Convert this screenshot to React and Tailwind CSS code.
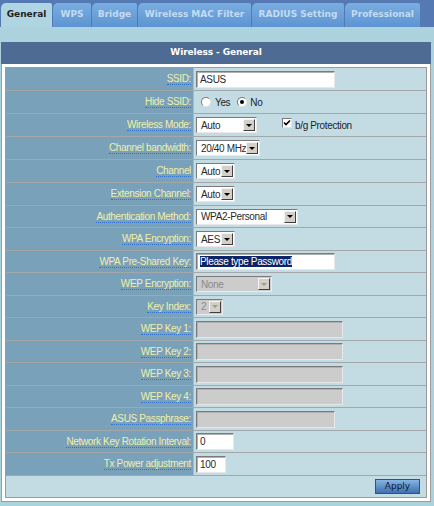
import React from "react";

const tabs = [
  { name: "General", w: "w-[51px]", active: true },
  { name: "WPS", w: "w-[38px]" },
  { name: "Bridge", w: "w-[45px]" },
  { name: "Wireless MAC Filter", w: "w-[113px]" },
  { name: "RADIUS Setting", w: "w-[92px]" },
  { name: "Professional", w: "w-[75px]" },
];

function Arrow({ disabled }) {
  return (
    <span className="flex h-full w-[12px] shrink-0 items-center justify-center border border-t-[#f4f4f4] border-l-[#f4f4f4] border-r-[#404040] border-b-[#404040] bg-[#d4d0c8]">
      <span
        className={`h-0 w-0 border-x-[3px] border-t-[3px] border-x-transparent ${
          disabled ? "border-t-[#9a9a9a]" : "border-t-black"
        }`}
      />
    </span>
  );
}

function Select({ w, value, disabled }) {
  return (
    <div
      className={`flex h-[16px] ${w} items-stretch border border-t-[#7a7a7a] border-l-[#7a7a7a] border-r-[#eaeaea] border-b-[#eaeaea] py-[1px] pr-[1px] ${
        disabled ? "bg-[#cccccc] text-[#8a8a8a]" : "bg-white text-[#2a2a2a]"
      }`}
    >
      <span className="flex min-w-0 flex-1 items-center overflow-hidden whitespace-nowrap pl-[4px]">
        {value}
      </span>
      <Arrow disabled={disabled} />
    </div>
  );
}

function Input({ w, value, disabled, selected }) {
  return (
    <div
      className={`flex h-[17px] ${w} items-center whitespace-nowrap border border-t-[#7a7a7a] border-l-[#7a7a7a] border-r-[#e8e8e8] border-b-[#e8e8e8] pl-[3px] text-[#2a2a2a] shadow-[inset_1px_1px_0_#b0b0b0] ${
        disabled ? "bg-[#cccccc]" : "bg-white"
      }`}
    >
      {selected ? (
        <span className="bg-[#0a246a] leading-[11px] text-white">{value}</span>
      ) : (
        value
      )}
    </div>
  );
}

function Radio({ checked }) {
  return (
    <span className="flex h-[10px] w-[10px] items-center justify-center rounded-full border border-t-[#7a7a7a] border-l-[#7a7a7a] border-r-[#e4e4e4] border-b-[#e4e4e4] bg-white">
      {checked && <span className="h-[4px] w-[4px] rounded-full bg-black" />}
    </span>
  );
}

function Checkbox() {
  return (
    <span className="flex h-[10px] w-[10px] items-center justify-center border border-t-[#7a7a7a] border-l-[#7a7a7a] border-r-[#e4e4e4] border-b-[#e4e4e4] bg-white">
      <svg width="8" height="8" viewBox="0 0 8 8">
        <path d="M1 3.5 L3 5.5 L7 1.5" stroke="black" strokeWidth="1.6" fill="none" />
      </svg>
    </span>
  );
}

const rows = [
  { label: "SSID:", h: "h-[23px]", el: <Input w="w-[139px]" value="ASUS" /> },
  {
    label: "Hide SSID:",
    h: "h-[23px]",
    el: (
      <div className="flex items-center pl-[5px]">
        <Radio />
        <span className="ml-[4px]">Yes</span>
        <span className="ml-[7px]">
          <Radio checked />
        </span>
        <span className="ml-[3px]">No</span>
      </div>
    ),
  },
  {
    label: "Wireless Mode:",
    h: "h-[23px]",
    el: (
      <div className="flex items-center">
        <Select w="w-[61px]" value="Auto" />
        <span className="-mt-[4px] ml-[25px]">
          <Checkbox />
        </span>
        <span className="ml-[3px]">b/g Protection</span>
      </div>
    ),
  },
  { label: "Channel bandwidth:", h: "h-[23px]", el: <Select w="w-[64px]" value="20/40 MHz" /> },
  { label: "Channel", h: "h-[23px]", el: <Select w="w-[39px]" value="Auto" /> },
  { label: "Extension Channel:", h: "h-[23px]", el: <Select w="w-[39px]" value="Auto" /> },
  { label: "Authentication Method:", h: "h-[22px]", el: <Select w="w-[102px]" value="WPA2-Personal" /> },
  { label: "WPA Encryption:", h: "h-[23px]", el: <Select w="w-[39px]" value="AES" /> },
  {
    label: "WPA Pre-Shared Key:",
    h: "h-[22px]",
    el: <Input w="w-[139px]" value="Please type Password" selected />,
  },
  { label: "WEP Encryption:", h: "h-[23px]", el: <Select w="w-[76px]" value="None" disabled /> },
  { label: "Key Index:", h: "h-[22px]", el: <Select w="w-[27px]" value="2" disabled /> },
  { label: "WEP Key 1:", h: "h-[23px]", el: <Input w="w-[147px]" disabled /> },
  { label: "WEP Key 2:", h: "h-[22px]", el: <Input w="w-[147px]" disabled /> },
  { label: "WEP Key 3:", h: "h-[23px]", el: <Input w="w-[147px]" disabled /> },
  { label: "WEP Key 4:", h: "h-[22px]", el: <Input w="w-[147px]" disabled /> },
  { label: "ASUS Passphrase:", h: "h-[23px]", el: <Input w="w-[139px]" disabled /> },
  { label: "Network Key Rotation Interval:", h: "h-[22px]", el: <Input w="w-[38px]" value="0" /> },
  { label: "Tx Power adjustment", h: "h-[23px]", el: <Input w="w-[30px]" value="100" /> },
];

export default function App() {
  return (
    <div className="h-[506px] w-[434px] overflow-hidden bg-[#acd2de] font-['Liberation_Sans',Arial,sans-serif] text-[10px] tracking-[-0.35px]">
      {/* tab strip */}
      <div className="flex h-[27px] items-end gap-[1px] bg-[#5479b3] pl-[1px]">
        {tabs.map((t) => (
          <div
            key={t.name}
            className={`flex h-[24px] ${t.w} items-center justify-center rounded-tl-[5px] rounded-tr-[2px] font-['DejaVu_Sans',Verdana,sans-serif] text-[9px] font-bold tracking-normal ${
              t.active
                ? "bg-[#b0d5e2] text-[#1e1e1e]"
                : "bg-gradient-to-b from-[#7aaee2] to-[#5d94d2] text-[#c4dcf2]"
            }`}
          >
            {t.name}
          </div>
        ))}
      </div>

      <div className="pl-[1px] pt-[15px]">
        <div className="flex h-[22px] w-[430px] items-center justify-center bg-[#4d6b93] font-['DejaVu_Sans',Verdana,sans-serif] text-[9px] font-bold tracking-[-0.1px] text-white">
          Wireless - General
        </div>

        <div className="w-[430px] border-x border-b border-[#9c9c9c] bg-white p-[3px]">
          <div className="border border-[#9a9a9a]">
            {rows.map((r) => (
              <div key={r.label} className={`flex ${r.h} border-b border-[#a2a8aa]`}>
                <div className="flex w-[188px] items-center justify-end border-r border-[#a9bac2] bg-[#7aa1ba] pr-[2px]">
                  <span className="border-b border-dotted border-[#2f6fc9] leading-[11px] text-[#f0f0a6]">
                    {r.label}
                  </span>
                </div>
                <div className="flex flex-1 items-center bg-[#c3dce4] pl-[2px] text-[#1e1e1e]">
                  {r.el}
                </div>
              </div>
            ))}
            <div className="flex h-[21px] items-center justify-end bg-[#c3dce4] pr-[6px]">
              <button className="flex h-[15px] w-[45px] items-center justify-center border border-[#2d5287] bg-gradient-to-b from-[#86b4e4] to-[#3f70b0] font-['DejaVu_Sans',Verdana,sans-serif] text-[9px] tracking-normal text-[#0e1a30]">
                Apply
              </button>
            </div>
          </div>
        </div>
      </div>
    </div>
  );
}
